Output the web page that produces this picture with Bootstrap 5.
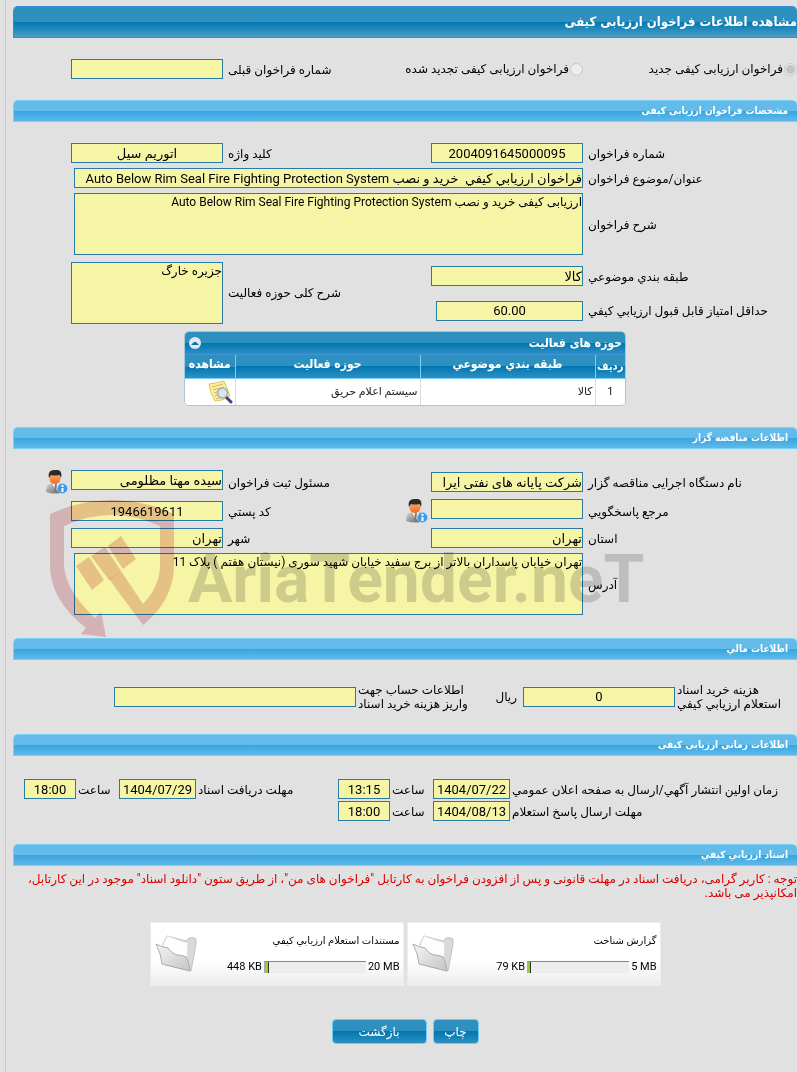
<!DOCTYPE html>
<html lang="fa" dir="rtl">
<head>
<meta charset="utf-8">
<meta name="viewport" content="width=device-width, initial-scale=1">
<title>مشاهده اطلاعات فراخوان ارزیابی کیفی</title>
<link href="https://cdn.jsdelivr.net/npm/bootstrap@5.3.0/dist/css/bootstrap.min.css" rel="stylesheet">
<style>
:root { --ink:#000; --field:#f6f4a5; --edge:#2a7aa8; }
body { background:#e1e1e1; color:var(--ink); font:12px/14px Roboto,"DejaVu Sans",sans-serif; }
.sheet { margin-left:5px; padding:6px 0 28px 7px; border-left:1px solid #c8c8c8; min-height:100vh; }
.bar-main, .bar-sub, .areas-top, .areas th { font-family:"DejaVu Sans Condensed","DejaVu Sans",sans-serif; font-weight:bold; color:#fff; }
.bar-main, .bar-sub { margin:0; display:flex; align-items:center; }
.bar-main { height:32px; font-size:13px; border:1px solid #2f8fdc; border-width:1px 0 1px 1px; border-radius:5px 5px 0 0; background:linear-gradient(#2e90bf 0 50%,#0077b0 50%,#4a9fc8); }
.bar-sub { height:22px; font-size:10px; padding-right:9px; border:1px solid #77d0f7; border-width:1px 0 1px 1px; border-radius:5px 5px 0 0; background:linear-gradient(#63bbea 0 50%,#36a5e0 50%,#5fb9ea); }
.fields { display:grid; align-items:center; column-gap:5px; row-gap:5px; padding:21px 0 23px; grid-template-columns:minmax(0,209fr) 152px minmax(0,198fr) 152px minmax(0,53fr); }
.fields.kinds { padding-bottom:21px; }
.fields.basics { padding-bottom:7px; grid-template-rows:20px 20px 62px 32px 27px; }
.fields.agency { grid-template-rows:24px 24px 20px 62px; }
.fields.costs { column-gap:2px; padding-top:22px; grid-template-columns:minmax(0,120fr) 152px minmax(0,163fr) 242px minmax(0,99fr); }
.fields.times { gap:2px; padding-top:23px; grid-template-columns:minmax(0,1fr) 77px 39px 52px 138px 77px 39px 52px 9px; }
.c1 { grid-column:1; } .c2 { grid-column:2; } .c3 { grid-column:3; } .c4 { grid-column:4; } .c5 { grid-column:5; }
.c24 { grid-column:2 / 5; margin-left:3px; }
.c23 { grid-column:2 / 4; }
.r1 { grid-row:1; } .r2 { grid-row:2; } .r3 { grid-row:3; } .r4 { grid-row:4; } .r5 { grid-row:5; }
.r45 { grid-row:4 / 6; align-self:end; }
.cap { justify-self:end; text-align:right; white-space:nowrap; padding-top:1px; }
.cap.to-field { text-align:left; }
.cap.to-start { text-align:right; }
.field { display:block; width:100%; height:20px; padding:0; border:1px solid var(--edge); border-radius:0; background:var(--field); color:var(--ink); font-size:13px; line-height:18px; }
.field:focus { outline:1px solid var(--edge); }
textarea.field { height:62px; font-size:12px; line-height:16px; resize:none; overflow:hidden; }
.mid { text-align:center; }
.score { width:147px; }
.dot { appearance:none; width:13px; height:13px; margin:0; flex:none; border:1px solid #c6c6c6; border-radius:50%; background:#ededed; }
.dot:checked { background:radial-gradient(#c3c3c3 0 4px,#ededed 5px); }
.choice { display:flex; align-items:center; gap:1px; white-space:nowrap; }
.areas { width:442px; max-width:100%; margin:0 auto 21px; border:1px solid #a2c9dc; border-radius:5px; overflow:hidden; background:#fff; }
.areas-top { height:23px; padding:0 3px; font-size:12px; background:linear-gradient(#2e90bf 0 50%,#0077b0 50%,#2e8fc4); border-bottom:1px solid #3d94d6; }
.fold { width:12px; height:12px; margin-left:1px; padding:0; border:0; border-radius:50%; background:#dfe9f6; display:flex; align-items:center; justify-content:center; }
.areas table { margin:0; table-layout:fixed; font-size:11px; line-height:14px; }
.areas th { height:23px; padding:0 0 4px; text-align:center; font-size:12px; border:0; border-left:1px solid #77d0f7; border-bottom:1px solid #77d0f7; background:linear-gradient(#2e90bf 0 50%,#0077b0 50%,#2e8fc4); white-space:nowrap; vertical-align:middle; }
.areas th:first-child { font-size:11px; padding:3px 0 1px; }
.areas td { height:27px; padding:0 2px; border:0; border-left:1px solid #ddd; background:#fff; color:#222; vertical-align:middle; text-align:right; }
.areas th:last-child, .areas td:last-child { border-left:0; }
.iconbtn { border:0; padding:0; background:none; display:block; line-height:0; }
.who { width:22px; height:24px; justify-self:start; margin-right:-2px; }
.stamp { position:absolute; left:36px; top:50px; width:620px; height:144px; pointer-events:none; mix-blend-mode:multiply; }
.note { color:#d90000; margin:0; padding-top:6px; }
.docs { gap:3px; margin-top:22px; }
.doc { width:254px; height:64px; border:1px solid #ececec; background:linear-gradient(#fff 60%,#ededed); font-size:10px; }
.doc-body { padding:11px 3px 0 0; }
.doc-size { gap:2px; margin-top:12px; font-size:11px; }
.meter { width:102px; height:12px; border-radius:0; border-top:1px solid #888; border-left:1px solid #aaa; background:#ededed; }
.meter .progress-bar { background:#9c3; border-right:1px solid #333; }
.acts { gap:6px; margin-top:33px; }
.act { height:25px; padding:0; color:#fff; font-size:12px; line-height:22px; border:1px solid #6ecbf3; border-radius:4px; background:linear-gradient(#2e90bf 0 50%,#0077b0 50%,#2e8fbe); }
.act:hover { color:#fff; }
.w-print { width:46px; } .w-back { width:95px; }
</style>
</head>
<body>
<main class="sheet">
  <h1 class="bar-main">مشاهده اطلاعات فراخوان ارزیابی کیفی</h1>
  <form>
  <div class="fields kinds">
    <label class="choice c1 r1"><input class="dot" type="radio" name="kind" checked disabled>فراخوان ارزیابی کیفی جدید</label>
    <label class="choice c23 r1"><input class="dot" type="radio" name="kind" disabled>فراخوان ارزیابی کیفی تجدید شده</label>
    <label class="cap c3 r1" for="prev">شماره فراخوان قبلی</label>
    <input class="field c4 r1" id="prev" readonly>
  </div>

  <h2 class="bar-sub">مشخصات فراخوان ارزیابی کیفی</h2>
  <div class="fields basics">
    <label class="cap c1 r1" for="num">شماره فراخوان</label>
    <input class="field mid c2 r1" id="num" value="2004091645000095" readonly>
    <label class="cap c3 r1" for="key">کلید واژه</label>
    <input class="field mid c4 r1" id="key" value="اتوریم سیل" readonly>
    <label class="cap c1 r2" for="subj">عنوان/موضوع فراخوان</label>
    <input class="field c24 r2 w-auto" id="subj" value="فراخوان ارزيابي کيفي  خرید و نصب Auto Below Rim Seal Fire Fighting Protection System" readonly>
    <label class="cap c1 r3" for="desc">شرح فراخوان</label>
    <textarea class="field c24 r3 w-auto" id="desc" readonly>ارزیابی کیفی خرید و نصب Auto Below Rim Seal Fire Fighting Protection System</textarea>
    <label class="cap c1 r4" for="cls">طبقه بندي موضوعي</label>
    <input class="field c2 r4" id="cls" value="کالا" readonly>
    <label class="cap c1 r5" for="score">حداقل امتياز قابل قبول ارزيابي کيفي</label>
    <input class="field mid score c2 r5" id="score" value="60.00" readonly>
    <label class="cap c3 r45 align-self-center" for="scope">شرح کلی حوزه فعالیت</label>
    <textarea class="field c4 r45" id="scope" readonly>جزیره خارگ</textarea>
  </div>

  <div class="areas">
    <div class="areas-top d-flex align-items-center justify-content-between">
      <span>حوزه های فعالیت</span>
      <button type="button" class="fold" aria-label="بستن"><svg width="8" height="4" viewBox="0 0 8 4"><path d="M0 4 3 1h2l3 3z" fill="#176f9f"/></svg></button>
    </div>
    <table class="table">
      <colgroup><col style="width:30px"><col style="width:175px"><col><col style="width:50px"></colgroup>
      <thead><tr><th>ردیف</th><th>طبقه بندي موضوعي</th><th>حوزه فعالیت</th><th>مشاهده</th></tr></thead>
      <tbody><tr><td class="text-center">1</td><td>کالا</td><td>سیستم اعلام حریق</td><td>
        <button type="button" class="iconbtn" aria-label="مشاهده"><svg width="25" height="24" viewBox="0 0 25 24"><path d="M1 4 Q9 3 16 1L22 16Q15 21 7 21Q2 13 1 4Z" fill="#fbf0a0" stroke="#dcc35c"/><path d="m4 7 11-3M5 10l11-3M6 13l8-3M7 16l6-3M8 19l5-2" stroke="#cdb457"/><path d="m18 17 5 5" stroke="#4a3790" stroke-width="3" stroke-linecap="round"/><circle cx="14.500" cy="13" r="5" fill="#d3e6f4" fill-opacity=".9" stroke="#a3aebb" stroke-width="1.500"/></svg></button>
      </td></tr></tbody>
    </table>
  </div>

  <h2 class="bar-sub">اطلاعات مناقصه گزار</h2>
  <div class="position-relative">
  <div class="fields agency">
    <label class="cap c1 r1" for="org">نام دستگاه اجرایی مناقصه گزار</label>
    <input class="field c2 r1" id="org" value="شرکت پایانه های نفتی ایرا" readonly>
    <label class="cap c3 r1" for="reg">مسئول ثبت فراخوان</label>
    <input class="field c4 r1 align-self-start" id="reg" value="سیده مهتا مظلومی" readonly>
    <button type="button" class="iconbtn who c5 r1" aria-label="اطلاعات مسئول"><svg width="22" height="24" viewBox="0 0 22 24"><use href="#person"/></svg></button>
    <label class="cap c1 r2" for="ref">مرجع پاسخگويي</label>
    <input class="field c2 r2 align-self-start" id="ref" readonly>
    <button type="button" class="iconbtn who c3 r2" aria-label="اطلاعات مرجع"><svg width="22" height="24" viewBox="0 0 22 24">
      <defs>
        <linearGradient id="suit" x2="1" y2="1"><stop stop-color="#d6d6d6"/><stop offset="1" stop-color="#5c5c5c"/></linearGradient>
        <linearGradient id="face" x2="0" y2="1"><stop stop-color="#ffb070"/><stop offset="1" stop-color="#ee6c1d"/></linearGradient>
        <g id="person"><path d="M0 22Q0 14 6 13h7q5 1 5 9Q9 25 0 22Z" fill="url(#suit)"/><path d="m6 13 4 8 3-8z" fill="#fff"/><path d="m9 14-1 7 2 2 1-9z" fill="#7b7b7b"/><ellipse cx="9" cy="8.500" rx="5.500" ry="5.500" fill="url(#face)"/><path d="M3 8Q1 0 9 0q8-1 6 8-1-3-2-3-4 1-8 0-1 1-2 3Z" fill="#2b2b2b"/><circle cx="16.500" cy="18.500" r="5" fill="#3b9ae4" stroke="#b7dbf7" stroke-width=".6"/><path d="M15.500 15h2v2h-2zm0 3h2v4h-2z" fill="#fff"/></g>
      </defs>
      <use href="#person"/></svg></button>
    <label class="cap c3 r2" for="zip">کد پستي</label>
    <input class="field mid c4 r2" id="zip" value="1946619611" readonly>
    <label class="cap c1 r3" for="prov">استان</label>
    <input class="field c2 r3" id="prov" value="تهران" readonly>
    <label class="cap c3 r3" for="city">شهر</label>
    <input class="field c4 r3" id="city" value="تهران" readonly>
    <label class="cap c1 r4" for="addr">آدرس</label>
    <textarea class="field c24 r4 w-auto" id="addr" readonly>تهران خیابان پاسداران بالاتر از برج سفید خیابان شهید سوری (نیستان هفتم ) پلاک 11</textarea>
  </div>
  <svg class="stamp" viewBox="49 499 620 144" direction="ltr">
    <g fill="#c8505a" fill-opacity=".3"><path d="M50 514Q112 486 174 514V565Q174 600 143 625L109 579l12-8 22 33Q160 586 160 565V526Q112 504 64 526V565Q65 590 95 618l6-6 5 25-25-3 5-6Q50 600 50 565Z"/><path d="m76 566 13-9 15 23-12 10zM91 556l14-9 16 24-12 9zM108 546l13-10 15 23-13 10z"/></g>
    <text x="188" y="602" font-family="Roboto,sans-serif" font-weight="bold" font-size="66" fill="#000" fill-opacity=".16">AriaTender.neT</text>
  </svg>
  </div>

  <h2 class="bar-sub">اطلاعات مالي</h2>
  <div class="fields costs">
    <label class="cap to-field c1 r1" for="fee">هزینه خرید اسناد<br>استعلام ارزيابي کيفي</label>
    <input class="field mid c2 r1" id="fee" value="0" readonly>
    <span class="c3 r1 px-1">ریال</span>
    <label class="cap to-field c3 r1" for="acc">اطلاعات حساب جهت<br>واریز هزینه خرید اسناد</label>
    <input class="field c4 r1" id="acc" readonly>
  </div>

  <h2 class="bar-sub">اطلاعات زمانی ارزیابی کیفی</h2>
  <div class="fields times">
    <label class="cap c1 r1" for="d1">زمان اولین انتشار آگهي/ارسال به صفحه اعلان عمومي</label>
    <input class="field mid c2" id="d1" value="1404/07/22" readonly>
    <label class="cap c3" for="t1">ساعت</label>
    <input class="field mid" id="t1" value="13:15" readonly>
    <label class="cap" for="d2">مهلت دریافت اسناد</label>
    <input class="field mid" id="d2" value="1404/07/29" readonly>
    <label class="cap" for="t2">ساعت</label>
    <input class="field mid" id="t2" value="18:00" readonly>
    <label class="cap c1 r2" for="d3">مهلت ارسال پاسخ استعلام</label>
    <input class="field mid c2 r2" id="d3" value="1404/08/13" readonly>
    <label class="cap c3 r2" for="t3">ساعت</label>
    <input class="field mid c4 r2" id="t3" value="18:00" readonly>
  </div>

  <h2 class="bar-sub">اسناد ارزيابي کيفي</h2>
  <p class="note">توجه : کاربر گرامی، دریافت اسناد در مهلت قانونی و پس از افزودن فراخوان به کارتابل "فراخوان های من"، از طریق ستون "دانلود اسناد" موجود در این کارتابل، امکانپذیر می باشد.</p>

  <svg width="0" height="0" class="d-block"><defs>
    <linearGradient id="paper" x2="1" y2="1"><stop stop-color="#f6f6f6"/><stop offset="1" stop-color="#c4c4c4"/></linearGradient>
    <g id="folder" stroke-linejoin="round"><path d="M8 9 12 1l19 5 3-3q5-1 7 1v5l-5 27-28-7z" fill="#d9d9d9" stroke="#c2c2c2"/><path d="m8 10 4-9 21 7-1 16-24-7z" fill="#fdfdfd" stroke="#ddd"/><path d="M1 9q5 3 12 4 4 6 9 7 6 0 9 2 3 4 4 14L7 29Q6 18 1 9Z" fill="url(#paper)" stroke="#ababab"/></g>
  </defs></svg>
  <div class="d-flex justify-content-center docs">
    <div class="doc d-flex" dir="ltr">
      <svg class="flex-shrink-0 mt-2 ms-1" width="42" height="46" viewBox="0 0 42 38"><use href="#folder"/></svg>
      <div class="flex-grow-1 doc-body text-end">
        <div dir="rtl">گزارش شناخت</div>
        <div class="d-flex justify-content-end align-items-center doc-size"><span>79 KB</span><div class="progress meter"><div class="progress-bar" style="width:3%"></div></div><span>5 MB</span></div>
      </div>
    </div>
    <div class="doc d-flex" dir="ltr">
      <svg class="flex-shrink-0 mt-2 ms-1" width="42" height="46" viewBox="0 0 42 38"><use href="#folder"/></svg>
      <div class="flex-grow-1 doc-body text-end">
        <div dir="rtl">مستندات استعلام ارزيابي کيفي</div>
        <div class="d-flex justify-content-end align-items-center doc-size"><span>448 KB</span><div class="progress meter"><div class="progress-bar" style="width:4%"></div></div><span>20 MB</span></div>
      </div>
    </div>
  </div>
  <div class="d-flex justify-content-center acts">
    <button type="button" class="btn act w-print">چاپ</button>
    <button type="button" class="btn act w-back">بازگشت</button>
  </div>
  </form>
</main>
<script src="https://cdn.jsdelivr.net/npm/bootstrap@5.3.0/dist/js/bootstrap.bundle.min.js"></script>
</body>
</html>
